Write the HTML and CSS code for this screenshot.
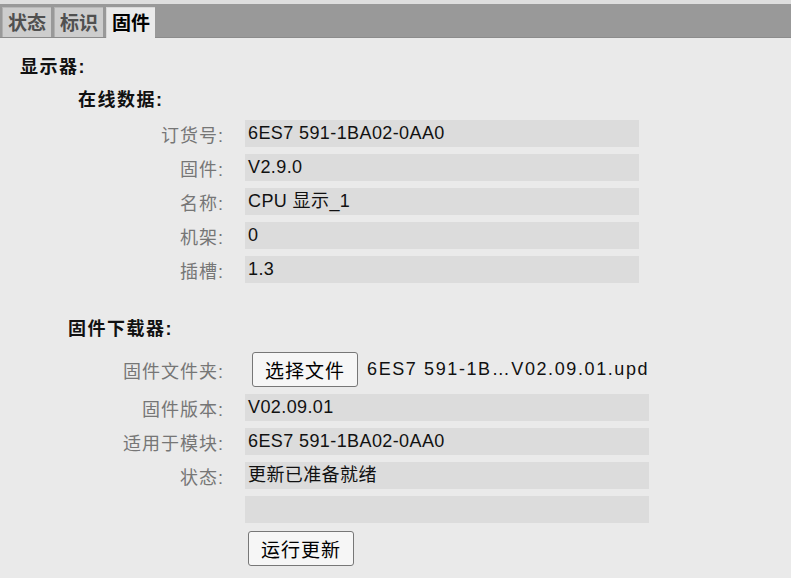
FILE: index.html
```html
<!DOCTYPE html>
<html lang="zh">
<head>
  <meta charset="utf-8">
  <title>固件</title>
  <link rel="stylesheet" href="styles.css">
</head>
<body>

  <div class="tabbar">
    <div class="tab">状态</div>
    <div class="tab">标识</div>
    <div class="tab active">固件</div>
  </div>

  <div class="content">
    <h2 class="title">显示器:</h2>

    <h3 class="sub sub-online">在线数据:</h3>
    <div class="rows rows-online">
      <div class="row"><span class="label">订货号:</span><span class="value">6ES7 591-1BA02-0AA0</span></div>
      <div class="row"><span class="label">固件:</span><span class="value">V2.9.0</span></div>
      <div class="row"><span class="label">名称:</span><span class="value">CPU 显示_1</span></div>
      <div class="row"><span class="label">机架:</span><span class="value">0</span></div>
      <div class="row"><span class="label">插槽:</span><span class="value">1.3</span></div>
    </div>

    <h3 class="sub sub-loader">固件下载器:</h3>
    <div class="rows rows-loader">
      <div class="row row-file">
        <span class="label">固件文件夹:</span>
        <span class="file">
          <button type="button" class="btn">选择文件</button>
          <span class="filename">6ES7 591-1B…V02.09.01.upd</span>
        </span>
      </div>
      <div class="row"><span class="label">固件版本:</span><span class="value">V02.09.01</span></div>
      <div class="row"><span class="label">适用于模块:</span><span class="value">6ES7 591-1BA02-0AA0</span></div>
      <div class="row"><span class="label">状态:</span><span class="value">更新已准备就绪</span></div>
      <div class="row"><span class="label"></span><span class="value"></span></div>
      <div class="row row-btn"><span class="label"></span><span><button type="button" class="btn">运行更新</button></span></div>
    </div>
  </div>

</body>
</html>
```

FILE: styles.css
```css
:root {
  --bg:        #eaeaea;
  --bar:       #999999;
  --box:       #dcdcdc;
  --label:     #767676;
  --text:      #111111;
  --tab-off:   #cdcdcd;
}
* { margin:0; padding:0; box-sizing:border-box; }
html, body { height:100%; }
body {
  font-family:'Liberation Sans','Noto Sans CJK SC',sans-serif;
  font-size:18px;
  letter-spacing:1px;
  background:var(--bg);
  color:var(--text);
  overflow:hidden;
}

/* barre d'onglets */
.tabbar {
  display:flex;
  align-items:flex-end;
  gap:3px;
  height:38px;
  padding-left:2px;
  background:var(--bar);
  border-top:4px solid #dedede;
  border-bottom:1px solid #8c8c8c;
}
.tab {
  height:30px;
  line-height:31px;
  padding:0 5px;
  font-size:19px;
  font-weight:bold;
  letter-spacing:0;
  color:#505050;
  background:var(--tab-off);
  border-left:1px solid #b0b0b0;
  border-top:1px solid #b8b8b8;
}
.tab.active {
  height:31px;
  margin-bottom:-1px;
  color:#000;
  background:var(--bg);
  border-color:#d8d8d8;
}

.content {
  padding-top:17px;
}
.title,
.sub {
  font-size:18px;
  line-height:24px;
  letter-spacing:1.5px;
}
.title { padding-left:20px; }
.sub-online { padding-left:78px; margin-top:9px; margin-bottom:8px; }
.sub-loader { padding-left:68px; margin-top:34px; margin-bottom:11px; }

.rows {
  display:flex;
  flex-direction:column;
  gap:7px;
}
.row {
  display:grid;
  grid-template-columns:224px 394px;
  column-gap:21px;
  align-items:center;
}
.rows-loader .row { grid-template-columns:224px 404px; }
.label {
  text-align:right;
  color:var(--label);
}
.value {
  display:block;
  height:27px;
  line-height:27px;
  padding-left:3px;
  letter-spacing:0.4px;
  background:var(--box);
  white-space:nowrap;
}
.row-file { height:34px; margin-bottom:1px; }
.file { display:flex; align-items:center; gap:9px; margin-left:7px; white-space:nowrap; }
.filename { font-size:18px; letter-spacing:1.6px; flex-shrink:0; }
.row-btn { margin-top:1px; }
.row-btn > span { margin-left:3px; }

.btn {
  flex-shrink:0;
  white-space:nowrap;
  font-family:inherit;
  font-size:19px;
  letter-spacing:1px;
  height:35px;
  padding:0 12px 0 12px;
  color:#000;
  background:#f6f6f6;
  border:1px solid #777;
  border-radius:3px;
}
```
